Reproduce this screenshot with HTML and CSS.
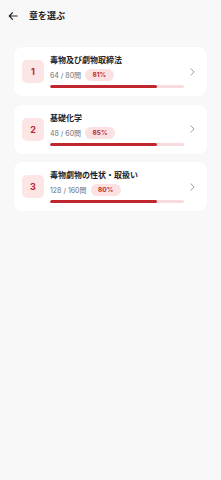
FILE: index.html
```html
<!DOCTYPE html>
<html lang="ja">
<head>
<meta charset="utf-8">
<link rel="stylesheet" href="styles.css">
</head>
<body>
<header class="topbar">
  <svg class="back" viewBox="0 0 12 12" width="10" height="10"><path d="M11 6H1.5M5.5 2L1.5 6l4 4" fill="none" stroke="#222" stroke-width="1.4" stroke-linecap="round" stroke-linejoin="round"/></svg>
  <h1 class="title">章を選ぶ</h1>
</header>
<main class="list">
  <div class="card">
    <div class="num">1</div>
    <div class="body">
      <div class="name">毒物及び劇物取締法</div>
      <div class="stats"><span class="count">64 / 80問</span><span class="pill">81%</span></div>
      <div class="bar"><div class="fill" style="width:80%"></div></div>
    </div>
    <svg class="chev" viewBox="0 0 6 10" width="5" height="8"><path d="M1 1l4 4-4 4" fill="none" stroke="#8a8f98" stroke-width="1.1" stroke-linecap="round" stroke-linejoin="round"/></svg>
  </div>
  <div class="card">
    <div class="num">2</div>
    <div class="body">
      <div class="name">基礎化学</div>
      <div class="stats"><span class="count">48 / 60問</span><span class="pill">85%</span></div>
      <div class="bar"><div class="fill" style="width:80%"></div></div>
    </div>
    <svg class="chev" viewBox="0 0 6 10" width="5" height="8"><path d="M1 1l4 4-4 4" fill="none" stroke="#8a8f98" stroke-width="1.1" stroke-linecap="round" stroke-linejoin="round"/></svg>
  </div>
  <div class="card">
    <div class="num">3</div>
    <div class="body">
      <div class="name">毒物劇物の性状・取扱い</div>
      <div class="stats"><span class="count">128 / 160問</span><span class="pill">80%</span></div>
      <div class="bar"><div class="fill" style="width:80%"></div></div>
    </div>
    <svg class="chev" viewBox="0 0 6 10" width="5" height="8"><path d="M1 1l4 4-4 4" fill="none" stroke="#8a8f98" stroke-width="1.1" stroke-linecap="round" stroke-linejoin="round"/></svg>
  </div>
</main>
</body>
</html>
```
FILE: styles.css
```css
html, body {
  margin: 0;
  padding: 0;
  background: #f8f8f9;
  font-family: Inter, "Noto Sans CJK JP", "Noto Sans", sans-serif;
  color: #1d1d1f;
}
.topbar {
  display: flex;
  align-items: center;
  height: 32px;
  padding: 0 0 0 8px;
}
.back { display: block; }
.title {
  margin: 0 0 0 11px;
  font-family: "Noto Sans CJK JP", sans-serif;
  font-size: 9px;
  font-weight: 700;
  line-height: 12px;
}
.list {
  display: flex;
  flex-direction: column;
  gap: 8.5px;
  padding: 15px 14px 0 14px;
}
.card {
  display: flex;
  align-items: center;
  background: #fff;
  border-radius: 8px;
  padding: 8px 12px 8px 8px;
  box-shadow: 0 0 2px rgba(0,0,0,0.03);
}
.num {
  width: 22px;
  height: 23px;
  border-radius: 5px;
  background: #fbe5e5;
  color: #c0262d;
  font-size: 9px;
  font-weight: 700;
  display: flex;
  align-items: center;
  justify-content: center;
  flex: none;
}
.body {
  flex: 1;
  margin-left: 6px;
  margin-right: 6px;
}
.name {
  font-family: "Noto Sans CJK JP", sans-serif;
  font-size: 8px;
  font-weight: 700;
  line-height: 12px;
  margin-top: -1px;
}
.stats {
  display: flex;
  align-items: center;
  gap: 4px;
  margin-top: 3px;
  height: 12px;
}
.count {
  font-size: 7px;
  color: #6b6f76;
}
.pill {
  background: #fbe1e1;
  color: #c0262d;
  font-size: 6.5px;
  font-weight: 700;
  border-radius: 6px;
  padding: 0 7.5px;
  height: 12px;
  line-height: 12px;
}
.bar {
  margin-top: 4px;
  height: 3px;
  border-radius: 2px;
  background: #f7dcdd;
  overflow: hidden;
}
.fill {
  height: 100%;
  background: #c0262d;
  border-radius: 2px;
}
.chev { flex: none; display: block; }
```
